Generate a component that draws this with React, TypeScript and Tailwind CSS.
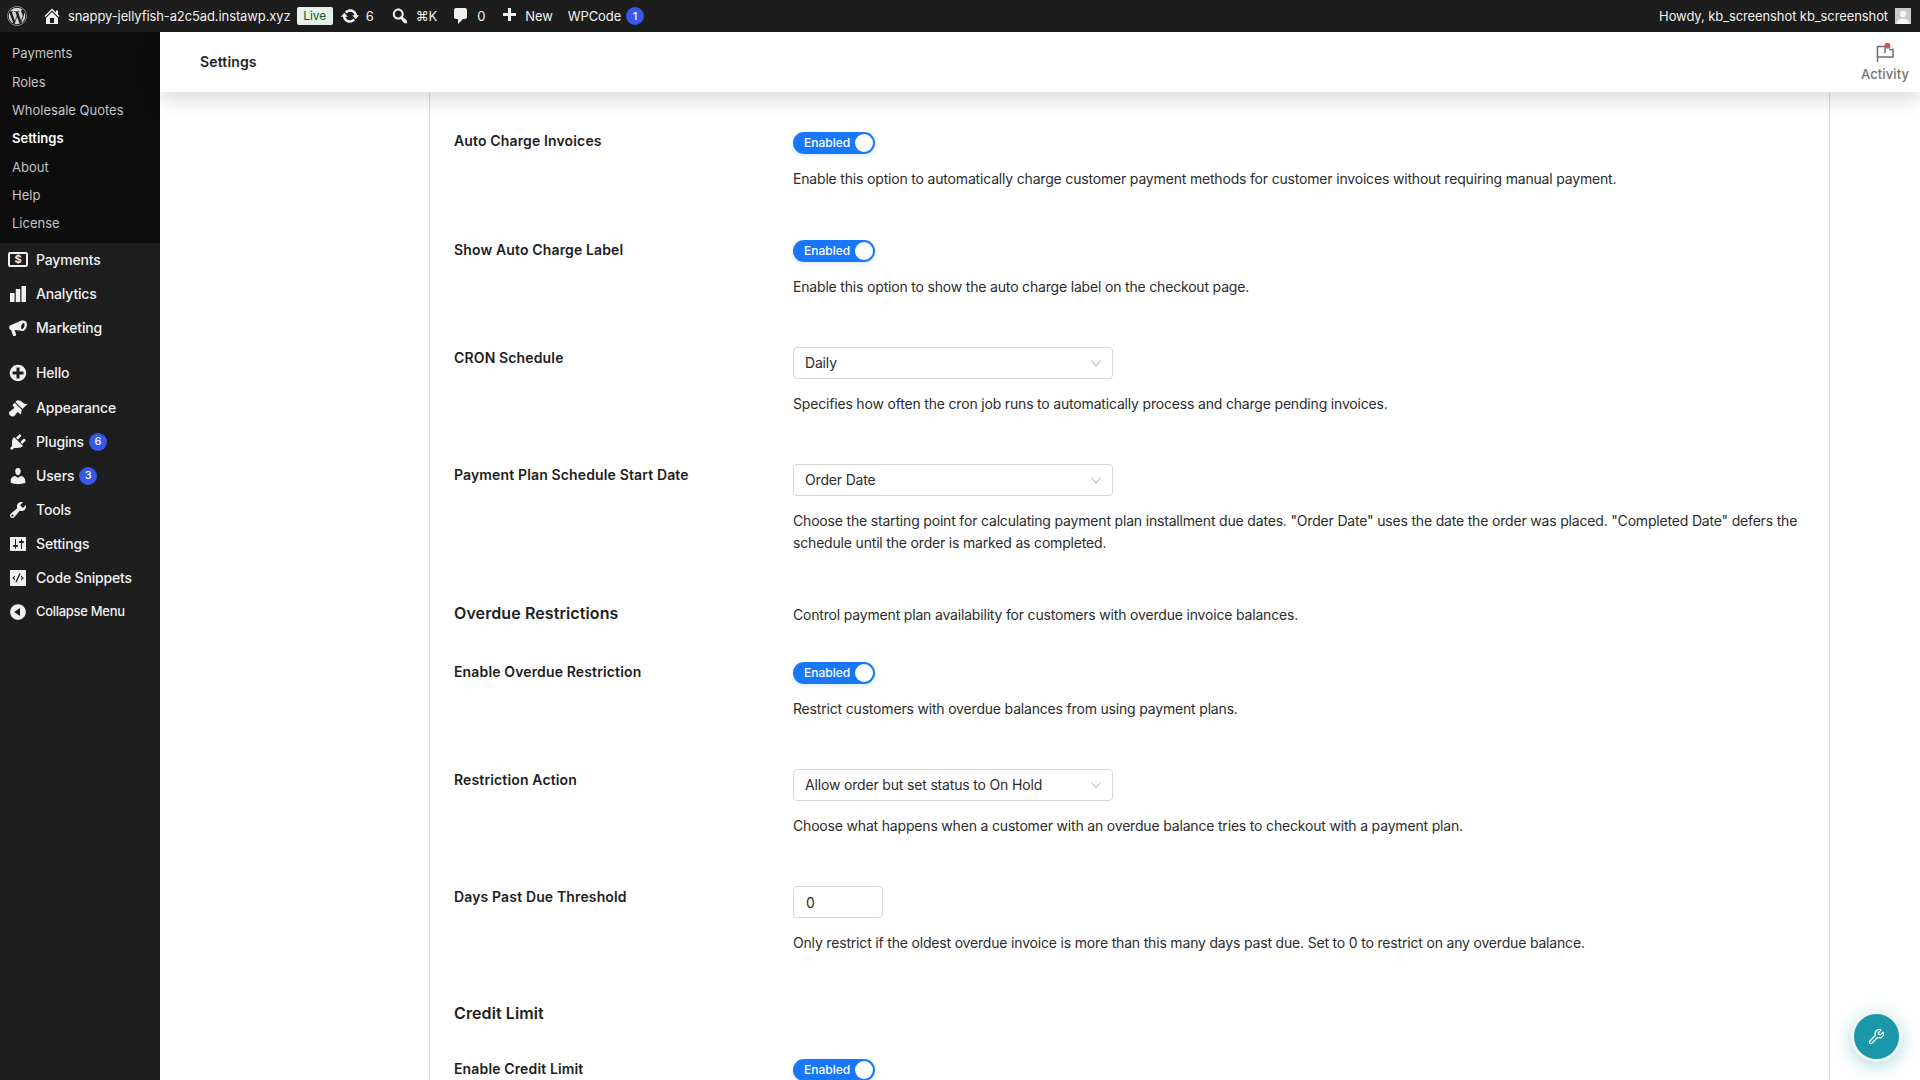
import { FaWordpress } from 'react-icons/fa';
import { Wrench } from 'lucide-react';

const dash = {
  home: 'M16 8.5l1.53 1.53-1.06 1.06L10 4.62l-6.47 6.47-1.06-1.06L10 2.5l4 4v-2h2v4zm-6-2.46l6 5.99V18H4v-5.97zM12 17v-5H8v5h4z',
  update:
    'M10.2 3.28c3.53 0 6.43 2.61 6.92 6h2.08l-3.5 4-3.5-4h2.32c-.45-1.97-2.21-3.45-4.32-3.45-1.45 0-2.73.71-3.54 1.78L4.95 5.66C6.23 4.2 8.11 3.28 10.2 3.28zm-.4 13.44c-3.52 0-6.43-2.61-6.92-6H.8l3.5-4c1.17 1.33 2.33 2.67 3.5 4H5.48c.45 1.97 2.21 3.45 4.32 3.45 1.45 0 2.73-.71 3.54-1.78l1.71 1.95c-1.28 1.46-3.15 2.38-5.25 2.38z',
  search:
    'M12.14 4.18c1.87 1.87 2.11 4.75.72 6.89.12.1.22.21.36.31.2.16.47.36.81.59.34.24.56.39.66.47.42.31.73.57.94.78.32.32.6.65.84 1 .25.35.44.69.59 1.04.14.35.21.68.18 1-.02.32-.14.59-.36.81s-.49.34-.81.36c-.31.02-.65-.04-.99-.19-.35-.14-.7-.34-1.04-.59-.35-.24-.68-.52-1-.84-.21-.21-.47-.52-.77-.93-.1-.13-.25-.35-.47-.66-.22-.32-.4-.57-.56-.78-.16-.2-.29-.35-.44-.5-2.07 1.09-4.69.76-6.44-.98-2.14-2.15-2.14-5.64 0-7.78 2.15-2.15 5.63-2.15 7.78 0zm-1.41 6.36c1.36-1.37 1.36-3.58 0-4.95-1.37-1.37-3.59-1.37-4.95 0-1.37 1.37-1.37 3.58 0 4.95 1.36 1.37 3.58 1.37 4.95 0z',
  comment: 'M5 2h9c1.1 0 2 .9 2 2v7c0 1.1-.9 2-2 2h-2l-5 5v-5H5c-1.1 0-2-.9-2-2V4c0-1.1.9-2 2-2z',
  plus: 'M17 7v3h-5v5H9v-5H4V7h5V2h3v5h5z',
  chart: 'M2 9h4.5v9H2zM7.75 5h4.5v13h-4.5zM13.5 2H18v16h-4.5z',
  megaphone:
    'M17.5 3.2c1.5.9 1.9 3.7.9 6.3-.9 2.3-2.6 3.8-4 3.6L7.6 11.9l-1 .2 1.5 4.2c.2.6-.1 1.2-.7 1.4l-1 .3c-.6.2-1.2-.1-1.4-.6L3.2 12.200C1.700 11.800 1 10.500 1.200 9.200c.2-1.400 1.200-2.400 2.600-2.500l8.900-3.900c1.800-.6 3.700-.6 4.800.4zM15.800 5c-.9 0-2 1.200-2.500 2.800-.5 1.600-.2 3 .6 3.200.8.2 1.900-1 2.400-2.600.5-1.600.3-3.200-.5-3.400z',
  plusAlt:
    'M15.8 4.2c3.2 3.21 3.2 8.39 0 11.6-3.21 3.2-8.39 3.2-11.6 0C1 12.59 1 7.41 4.2 4.2 7.41 1 12.59 1 15.8 4.2zm-4.3 11.3v-4h4v-3h-4v-4h-3v4h-4v3h4v4h3z',
  brush:
    'M14.48 11.06L7.41 3.99l1.5-1.5c.5-.56 2.3-.47 3.51.32 1.21.8 1.43 1.28 2.91 2.1 1.18.64 2.45 1.26 4.45.85zm-.71.71L6.7 4.7 4.93 6.47c-.39.39-.39 1.02 0 1.41l1.06 1.06c.39.39.39 1.03 0 1.42-.6.6-1.43 1.11-2.21 1.69-.35.26-.7.53-1.01.84C1.43 13.23.99 14.03 1 14.98c.01.95.45 1.71 1.14 2.4.69.69 1.5 1.1 2.41 1.12.91.03 1.73-.38 2.07-.72.34-.34.57-.66.82-.99.58-.78 1.11-1.61 1.7-2.2.39-.39 1.03-.4 1.41 0l1.07 1.06c.39.39 1.02.39 1.41 0z',
  plugin:
    'M13.11 4.36L9.87 7.6 8 5.73l3.24-3.24c.35-.34 1.05-.2 1.56.32.52.51.66 1.21.31 1.55zm-8 1.77l.91-1.12 9.01 9.01-1.19.84c-.71.71-2.63 1.16-3.82 1.16H6.14L4.9 17.26c-.59.59-1.54.59-2.12 0-.59-.58-.59-1.53 0-2.12l1.24-1.24v-3.88c0-1.13.4-3.19 1.09-3.89zm7.26 3.97l3.24-3.24c.34-.35 1.04-.21 1.55.31.52.51.66 1.21.31 1.55l-3.24 3.25z',
  users:
    'M10 9.25c-2.27 0-2.73-3.44-2.73-3.44C7 4.02 7.82 2 9.97 2c2.16 0 2.98 2.02 2.71 3.81 0 0-.41 3.44-2.68 3.44zm0 2.57L12.72 10c2.39 0 4.52 2.33 4.52 4.53v2.49s-3.65 1.13-7.24 1.13c-3.65 0-7.24-1.13-7.24-1.13v-2.49c0-2.25 1.94-4.48 4.47-4.48z',
  tools:
    'M16.68 9.77c-1.34 1.34-3.3 1.67-4.95.99l-5.41 6.52c-.99.99-2.59.99-3.58 0s-.99-2.59 0-3.57l6.52-5.42c-.68-1.65-.35-3.61.99-4.95 1.28-1.28 3.12-1.62 4.72-1.06l-2.89 2.89 2.82 2.82 2.86-2.87c.53 1.58.18 3.39-1.08 4.67zM3.81 16.21c.4.39 1.04.39 1.43 0 .4-.4.4-1.04 0-1.43-.39-.4-1.03-.4-1.43 0-.39.39-.39 1.03 0 1.43z',
  settings:
    'M18 16V4c0-.55-.45-1-1-1H3c-.55 0-1 .45-1 1v12c0 .55.45 1 1 1h14c.55 0 1-.45 1-1zM8 11h1c.55 0 1 .45 1 1s-.45 1-1 1H8v1.500c0 .28-.22.5-.5.5s-.5-.22-.5-.5V13H6c-.55 0-1-.45-1-1s.45-1 1-1h1V5.500c0-.28.22-.5.5-.5s.5.22.5.5V11zm5-2h-1c-.55 0-1-.45-1-1s.45-1 1-1h1V5.500c0-.28.22-.5.5-.5s.5.22.5.5V7h1c.55 0 1 .45 1 1s-.45 1-1 1h-1v5.500c0 .28-.22.5-.5.5s-.5-.22-.5-.5V9z',
  snippets:
    'M3 2h14c.55 0 1 .45 1 1v14c0 .55-.45 1-1 1H3c-.55 0-1-.45-1-1V3c0-.55.45-1 1-1zm8.200 3.500L7.400 14.300h1.400l3.800-8.800h-1.400zM7 7.500L4.200 10 7 12.500V11L5.800 10 7 9V7.500zm6 0V9l1.200 1L13 11v1.500l2.800-2.500L13 7.500z',
  collapse: 'M10 2.160c4.330 0 7.840 3.510 7.840 7.840s-3.510 7.840-7.840 7.840S2.160 14.330 2.160 10 5.710 2.160 10 2.160zm2 11.720V6.120L6.180 9.970z',
};

const Dash = ({ d, className }: { d: string; className: string }) => (
  <svg viewBox="0 0 20 20" fill="currentColor" className={className}>
    <path d={d} />
  </svg>
);

const PaymentsIcon = () => (
  <span className="flex h-[15px] w-[20px] items-center justify-center rounded-[2px] border-2 border-[#f0f0f1] text-[11px] leading-none font-bold text-[#f0f0f1]">
    $
  </span>
);

const Count = ({ n, className = '' }: { n: number; className?: string }) => (
  <span
    className={`flex h-[18px] w-[18px] items-center justify-center rounded-full bg-[#3858e9] text-[11px] font-medium tracking-normal text-white ${className}`}
  >
    {n}
  </span>
);

const subItems = ['Payments', 'Roles', 'Wholesale Quotes', 'Settings', 'About', 'Help', 'License'];

const MenuItem = ({
  icon,
  label,
  count,
  className = 'text-[14px] tracking-[-0.16px]',
}: {
  icon: React.ReactNode;
  label: string;
  count?: number;
  className?: string;
}) => (
  <div className={`flex h-[34px] items-center font-medium text-[#f0f0f1] ${className}`}>
    <span className="flex w-[36px] shrink-0 justify-center">{icon}</span>
    <span>{label}</span>
    {count !== undefined && <Count n={count} className="ml-[5px]" />}
  </div>
);

const Sidebar = () => (
  <aside className="w-[160px] shrink-0 bg-[#1e1e1e]">
    <div className="bg-[#0c0c0c] pt-[8px] pb-[4.500px]">
      {subItems.map((s) => (
        <div
          key={s}
          className={`flex h-[28.300px] items-center pl-[12px] text-[13px] ${
            s === 'Settings' ? 'font-semibold text-white' : 'text-[#c3c4c7]'
          }`}
        >
          {s}
        </div>
      ))}
    </div>
    <MenuItem icon={<PaymentsIcon />} label="Payments" />
    <MenuItem icon={<Dash d={dash.chart} className="h-5 w-5" />} label="Analytics" />
    <MenuItem icon={<Dash d={dash.megaphone} className="h-5 w-5" />} label="Marketing" />
    <div className="h-[11px]" />
    <MenuItem icon={<Dash d={dash.plusAlt} className="h-5 w-5" />} label="Hello" />
    <div className="h-px" />
    <MenuItem icon={<Dash d={dash.brush} className="h-5 w-5" />} label="Appearance" />
    <MenuItem icon={<Dash d={dash.plugin} className="h-5 w-5" />} label="Plugins" count={6} />
    <MenuItem icon={<Dash d={dash.users} className="h-5 w-5" />} label="Users" count={3} />
    <MenuItem icon={<Dash d={dash.tools} className="h-5 w-5" />} label="Tools" />
    <MenuItem icon={<Dash d={dash.settings} className="h-5 w-5" />} label="Settings" />
    <MenuItem icon={<Dash d={dash.snippets} className="h-5 w-5" />} label="Code Snippets" />
    <MenuItem icon={<Dash d={dash.collapse} className="h-5 w-5" />} label="Collapse Menu" className="text-[13px] tracking-[-0.3px]" />
  </aside>
);

const AdminBar = () => (
  <header className="flex h-[32px] shrink-0 items-center bg-[#1d1d1d] text-[13px] tracking-[-0.1px] text-[#f0f0f1]">
    <FaWordpress className="ml-[7px] h-[20px] w-[20px] text-[#d5d6d8]" />
    <Dash d={dash.home} className="ml-[15px] h-[20px] w-[20px]" />
    <span className="ml-[6px] pt-px">snappy-jellyfish-a2c5ad.instawp.xyz</span>
    <span className="ml-[6px] flex h-[18px] w-[36px] items-center justify-center rounded-[2px] bg-[#e6f2e8] text-[12px] text-[#0f5a2a]">
      Live
    </span>
    <Dash d={dash.update} className="ml-[7px] h-[20px] w-[20px]" />
    <span className="ml-[6px] pt-px">6</span>
    <Dash d={dash.search} className="ml-[16px] h-[20px] w-[20px]" />
    <span className="ml-[6px] pt-px">⌘K</span>
    <Dash d={dash.comment} className="ml-[14px] h-[20px] w-[20px]" />
    <span className="ml-[6px] pt-px">0</span>
    <Dash d={dash.plus} className="ml-[14px] h-[20px] w-[20px]" />
    <span className="ml-[6px] pt-px">New</span>
    <span className="ml-[15px] pt-px">WPCode</span>
    <Count n={1} className="ml-[5px]" />
    <span className="mr-[7px] ml-auto pt-px">Howdy, kb_screenshot kb_screenshot</span>
    <span className="mr-[9px] flex h-[16px] w-[16px] items-end justify-center overflow-hidden bg-[#c8c8c8]">
      <svg viewBox="0 0 16 16" className="h-[16px] w-[16px]" fill="#f4f4f4">
        <circle cx="8" cy="6" r="3.200" />
        <path d="M1.500 16c.4-3.600 3-5.500 6.500-5.500s6.100 1.900 6.500 5.500z" />
      </svg>
    </span>
  </header>
);

const Toggle = () => (
  <div className="flex h-[22px] w-[82px] items-center justify-between rounded-full bg-[#1877fb] pr-[2px] pl-[11px] shadow-[0_2px_4px_rgba(24,119,251,0.15)]">
    <span className="text-[12px] font-medium text-white">Enabled</span>
    <span className="h-[18px] w-[18px] rounded-full bg-white" />
  </div>
);

const Select = ({ value }: { value: string }) => (
  <div className="flex h-[32px] w-[320px] items-center justify-between rounded-[4px] border border-[#d6d6d6] pr-[11px] pl-[11px] text-[14px] tracking-[-0.17px] text-[#2c2c2c]">
    <span className="pb-[1px]">{value}</span>
    <svg viewBox="0 0 10 7" fill="none" stroke="#a8a8a8" strokeWidth="1" className="h-[7px] w-[10px]">
      <path d="M.5.5L5 6 9.500.5" />
    </svg>
  </div>
);

const Row = ({
  label,
  children,
  desc,
  className,
  labelClass = 'pt-0',
}: {
  label: string;
  children: React.ReactNode;
  desc?: React.ReactNode;
  className: string;
  labelClass?: string;
}) => (
  <div className={`flex ${className}`}>
    <div className={`w-[339px] shrink-0 text-[14px] leading-[20px] font-semibold tracking-[0.14px] text-[#1e1e1e] ${labelClass}`}>
      {label}
    </div>
    <div className="flex-1 pr-[22px]">
      {children}
      {desc && <p className="mt-[14px] text-[14px] leading-[22px] tracking-[-0.18px] text-[#2c2c2c]">{desc}</p>}
    </div>
  </div>
);

const SettingsPanel = () => (
  <div className="ml-[269px] h-[1200px] w-[1401px] border-x border-[#dcdcde] pt-[40px] pl-[24px]">
    <Row className="" labelClass="-mt-px" label="Auto Charge Invoices" desc="Enable this option to automatically charge customer payment methods for customer invoices without requiring manual payment.">
      <Toggle />
    </Row>
    <Row className="mt-[50px]" label="Show Auto Charge Label" desc="Enable this option to show the auto charge label on the checkout page.">
      <Toggle />
    </Row>
    <Row className="mt-[49px]" labelClass="pt-px" label="CRON Schedule" desc="Specifies how often the cron job runs to automatically process and charge pending invoices.">
      <Select value="Daily" />
    </Row>
    <Row className="mt-[49px]" labelClass="pt-px" label="Payment Plan Schedule Start Date" desc={'Choose the starting point for calculating payment plan installment due dates. "Order Date" uses the date the order was placed. "Completed Date" defers the schedule until the order is marked as completed.'}>
      <Select value="Order Date" />
    </Row>
    <div className="mt-[48px] flex items-center">
      <h2 className="w-[339px] shrink-0 pb-[2px] text-[16px] leading-[22px] font-semibold tracking-[0.1px] text-[#1e1e1e]">Overdue Restrictions</h2>
      <p className="pt-px text-[14px] leading-[22px] tracking-[-0.18px] text-[#2c2c2c]">Control payment plan availability for customers with overdue invoice balances.</p>
    </div>
    <Row className="mt-[36px]" label="Enable Overdue Restriction" desc="Restrict customers with overdue balances from using payment plans.">
      <Toggle />
    </Row>
    <Row className="mt-[49px]" labelClass="pt-px" label="Restriction Action" desc="Choose what happens when a customer with an overdue balance tries to checkout with a payment plan.">
      <Select value="Allow order but set status to On Hold" />
    </Row>
    <Row className="mt-[49px]" labelClass="pt-px" label="Days Past Due Threshold" desc="Only restrict if the oldest overdue invoice is more than this many days past due. Set to 0 to restrict on any overdue balance.">
      <div className="flex h-[32px] w-[90px] items-center rounded-[4px] border border-[#d6d6d6] pl-[12px] text-[14px] text-[#2c2c2c]">0</div>
    </Row>
    <h2 className="mt-[48px] text-[16px] leading-[22px] font-semibold tracking-[0.1px] text-[#1e1e1e]">Credit Limit</h2>
    <Row className="mt-[35px]" label="Enable Credit Limit">
      <Toggle />
    </Row>
  </div>
);

export default function App() {
  return (
    <div className="relative flex h-screen flex-col overflow-hidden bg-white [font-family:Inter,sans-serif]">
      <AdminBar />
      <div className="flex min-h-0 flex-1">
        <Sidebar />
        <main className="flex min-w-0 flex-1 flex-col">
          <div className="relative z-10 flex h-[60px] shrink-0 items-center justify-between bg-white pl-[40px] shadow-[0_8px_20px_rgba(0,0,0,0.14)]">
            <span className="pb-[2px] text-[14px] font-semibold tracking-[0.14px] text-[#1e1e1e]">Settings</span>
            <div className="flex w-[60px] flex-col items-center pt-[3px] pr-[10px]">
              <svg viewBox="0 0 20 22" fill="none" stroke="#6b6f73" strokeWidth="1.500" className="h-[22px] w-[20px]">
                <path d="M2.500 19V3.500H10V10M14 6.500h4V14H2.500" />
                <circle cx="12.500" cy="2.800" r="3" fill="#d94f4f" stroke="none" />
              </svg>
              <span className="text-[13px] font-medium tracking-[0.1px] text-[#757575]">Activity</span>
            </div>
          </div>
          <div className="min-h-0 flex-1 overflow-hidden">
            <SettingsPanel />
          </div>
        </main>
      </div>
      <button className="absolute top-[1011px] left-[1851px] flex h-[51px] w-[51px] items-center justify-center rounded-full border-[3px] border-[#f2f6f7] bg-[#1a97a8] shadow-[0_4px_18px_rgba(26,151,168,0.35)]">
        <Wrench className="h-[17px] w-[17px] text-white" strokeWidth={1.800} />
      </button>
    </div>
  );
}
